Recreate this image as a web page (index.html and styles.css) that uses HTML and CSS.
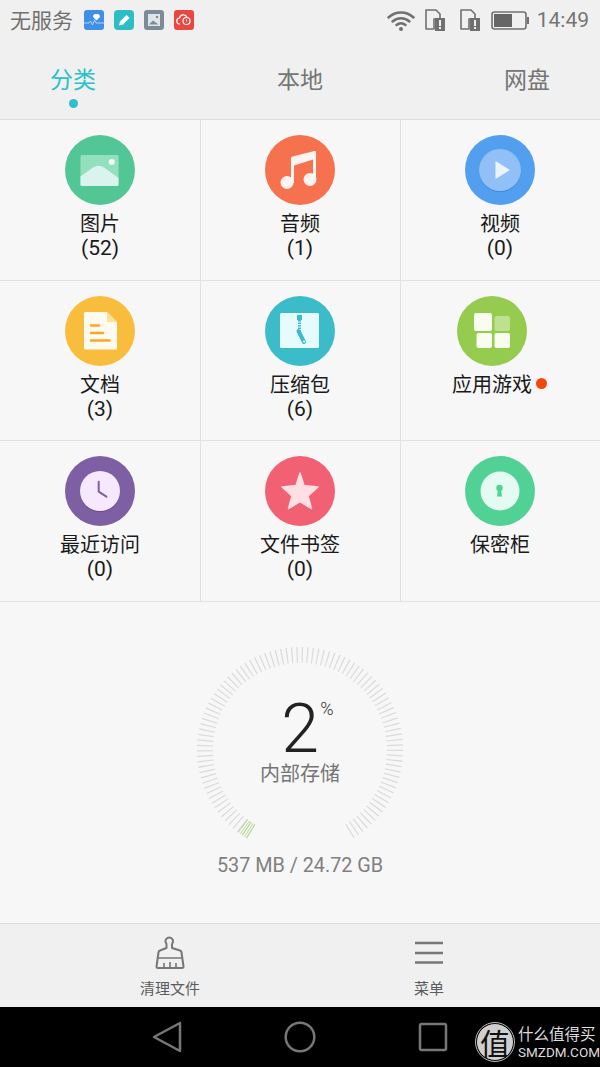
FILE: index.html
```html
<!DOCTYPE html>
<html lang="zh">
<head>
<meta charset="utf-8">
<title>文件管理</title>
<link rel="stylesheet" href="styles.css">
</head>
<body>
<div class="screen">
  <header class="top">
    <div class="status">
      <span class="carrier">无服务</span>
      <div class="notifs">
        <svg class="notif" viewBox="0 0 20 20"><rect width="20" height="20" rx="3" fill="#3f8fe6"/><path d="M12.500 10.500 9.300 7.300a2.300 2.300 0 0 1 3.200-3 2.300 2.300 0 0 1 3.200 3z" fill="#fff"/><path d="M0 13h5l1.500-2 2 4 2-5 1.500 3H20" fill="none" stroke="#cfe4fb" stroke-width=".8"/></svg>
        <svg class="notif" viewBox="0 0 20 20"><rect width="20" height="20" rx="4" fill="#2bbfc4"/><path d="M5 15.500l1-4 6.500-6.500 3 3-6.500 6.500z" fill="#fff"/></svg>
        <svg class="notif" viewBox="0 0 20 20"><rect width="20" height="20" rx="3" fill="#7c8b95"/><rect x="4" y="4" width="12" height="12" fill="#dfe5e8"/><path d="M5 14.500l4-4 5.500 4z" fill="#7c8b95"/><circle cx="13" cy="7" r="1.200" fill="#7c8b95"/></svg>
        <svg class="notif" viewBox="0 0 20 20"><rect width="20" height="20" rx="3" fill="#e8483f"/><path d="M6 14a3 3 0 0 1-.5-6 4 4 0 0 1 7.500-.8" fill="none" stroke="#fff" stroke-width="1.200"/><circle cx="12.500" cy="11" r="3.500" fill="none" stroke="#fff" stroke-width="1.200"/><path d="M12.500 9.500v2" stroke="#fff"/></svg>
      </div>
      <div class="sys">
        <svg class="wifi" viewBox="0 0 28 22"><g fill="none" stroke="#707070" stroke-width="2.500" stroke-linecap="round"><path d="M1.500 8.500a18 18 0 0 1 25 0"/><path d="M5.500 12.500a12.500 12.500 0 0 1 17 0"/><path d="M9.500 16a7 7 0 0 1 9 0"/></g><circle cx="14" cy="20" r="2" fill="#707070"/></svg>
        <svg class="sim" viewBox="0 0 20 22"><path d="M1 1h10l4 4v5H9v10H1z" fill="#f0f0f0" stroke="#707070" stroke-width="1.600" stroke-linejoin="round"/><rect x="10" y="9" width="10" height="13" fill="#707070"/><rect x="14" y="11" width="2" height="6" fill="#f0f0f0"/><rect x="14" y="18" width="2" height="2" fill="#f0f0f0"/></svg>
        <svg class="sim sim-second" viewBox="0 0 20 22"><path d="M1 1h10l4 4v5H9v10H1z" fill="#f0f0f0" stroke="#707070" stroke-width="1.600" stroke-linejoin="round"/><rect x="10" y="9" width="10" height="13" fill="#707070"/><rect x="14" y="11" width="2" height="6" fill="#f0f0f0"/><rect x="14" y="18" width="2" height="2" fill="#f0f0f0"/></svg>
        <svg class="battery" viewBox="0 0 38 19"><rect x="1" y="1" width="34" height="17" rx="2.500" fill="none" stroke="#707070" stroke-width="1.600"/><rect x="3" y="3" width="18" height="13" fill="#666"/><rect x="36" y="6" width="2" height="7" fill="#707070"/></svg>
        <span class="clock-text">14:49</span>
      </div>
    </div>
    <nav class="tabs">
      <span class="tab tab-active">分类</span>
      <span class="tab">本地</span>
      <span class="tab">网盘</span>
    </nav>
  </header>

  <section class="grid">
    <div class="cell"><div class="cell-inner">
      <svg class="icon" viewBox="0 0 70 70"><circle cx="35" cy="35" r="35" fill="#52c694"/><rect x="15.500" y="20" width="38" height="31" rx="1.500" fill="#93dfbe"/><path d="M15.500 41.500 28 32.500q5.500-3.500 11 0L53.500 43v6.500a1.500 1.500 0 0 1-1.500 1.500H17a1.500 1.500 0 0 1-1.500-1.500z" fill="#d9f4ee"/><circle cx="46.700" cy="27" r="3" fill="#f2fbf7"/></svg>
      <span class="label">图片</span><span class="count">(52)</span>
    </div></div>
    <div class="cell"><div class="cell-inner">
      <svg class="icon" viewBox="0 0 70 70"><circle cx="35" cy="35" r="35" fill="#f6724f"/><path d="M26 23.500Q26 22 27.500 21.500L49.500 16q1.500-.3 1.500 1V45h-3V24.500L29 30.500V48h-3z" fill="#fdf3f0"/><circle cx="22" cy="47.500" r="6.500" fill="#fdf3f0"/><circle cx="45" cy="44.500" r="6.500" fill="#fdf3f0"/></svg>
      <span class="label">音频</span><span class="count">(1)</span>
    </div></div>
    <div class="cell"><div class="cell-inner">
      <svg class="icon" viewBox="0 0 70 70"><circle cx="35" cy="35" r="35" fill="#529fef"/><circle cx="35" cy="36" r="21" fill="#4189e4"/><circle cx="35" cy="35" r="21" fill="#90c0f6"/><path d="M30.500 26 45 35l-14.500 9z" fill="#eaf3fe"/></svg>
      <span class="label">视频</span><span class="count">(0)</span>
    </div></div>

    <div class="cell"><div class="cell-inner">
      <svg class="icon" viewBox="0 0 70 70"><circle cx="35" cy="35" r="35" fill="#f8bd3d"/><path d="M20.500 16H42l10 10v26a1.500 1.500 0 0 1-1.500 1.500h-30A1.500 1.500 0 0 1 19 52V17.500a1.500 1.500 0 0 1 1.500-1.500z" fill="#fefaf0"/><path d="M42 16l10 10H42z" fill="#fbdf9c"/><g stroke="#f9a825" stroke-width="2.500" stroke-linecap="round"><path d="M26 29.500h8"/><path d="M26 37h12"/><path d="M26 44.500h18.500"/></g></svg>
      <span class="label">文档</span><span class="count">(3)</span>
    </div></div>
    <div class="cell"><div class="cell-inner">
      <svg class="icon" viewBox="0 0 70 70"><circle cx="35" cy="35" r="35" fill="#3cbbc9"/><rect x="15" y="17" width="39" height="35" rx="1.500" fill="#e5fbfe"/><rect x="32" y="19" width="5" height="5" fill="#3cbbc9"/><path d="M34.500 24v11" stroke="#3cbbc9" stroke-width="3" stroke-dasharray="1.500 1"/><path d="M33.500 35l5.500 11" stroke="#3cbbc9" stroke-width="4" stroke-linecap="round"/><circle cx="39" cy="45.500" r="1" fill="#e5fbfe"/></svg>
      <span class="label">压缩包</span><span class="count">(6)</span>
    </div></div>
    <div class="cell cell-badged"><div class="cell-inner">
      <svg class="icon" viewBox="0 0 70 70"><circle cx="35" cy="35" r="35" fill="#95cb4e"/><rect x="17" y="17" width="18" height="18" rx="2" fill="#f8fdf0"/><rect x="37.500" y="20" width="15.500" height="15" rx="2" fill="#bfe08f"/><rect x="19.500" y="37" width="15.500" height="15" rx="2" fill="#f8fdf0"/><rect x="37.500" y="37" width="15.500" height="15" rx="2" fill="#f8fdf0"/></svg>
      <span class="label">应用游戏<i class="badge"></i></span>
    </div></div>

    <div class="cell"><div class="cell-inner">
      <svg class="icon" viewBox="0 0 70 70"><circle cx="35" cy="35" r="35" fill="#7f5fa3"/><circle cx="35" cy="36" r="20" fill="#674888"/><circle cx="35" cy="35" r="20" fill="#f5e8ff"/><path d="M33.700 25.700v10l7.700 5" fill="none" stroke="#7f5fa3" stroke-width="2" stroke-linecap="round" stroke-linejoin="round"/></svg>
      <span class="label">最近访问</span><span class="count">(0)</span>
    </div></div>
    <div class="cell"><div class="cell-inner">
      <svg class="icon" viewBox="0 0 70 70"><circle cx="35" cy="35" r="35" fill="#f26073"/><path d="M35 17l4 12.500 14 1.500-10 9 3.500 12.500-11.500-7-11.500 7 3.500-12.500-10-9 14-1.500z" fill="#ffdfe4" stroke="#ffdfe4" stroke-width="1.500" stroke-linejoin="round"/></svg>
      <span class="label">文件书签</span><span class="count">(0)</span>
    </div></div>
    <div class="cell"><div class="cell-inner">
      <svg class="icon" viewBox="0 0 70 70"><circle cx="35" cy="35" r="35" fill="#52d195"/><circle cx="35" cy="35" r="19.500" fill="#e3fbf1"/><circle cx="34.500" cy="32" r="3.200" fill="#52d195"/><path d="M33 33h3l1 7.500h-5z" fill="#52d195"/></svg>
      <span class="label">保密柜</span>
    </div></div>
  </section>

  <section class="storage">
    <div class="gauge">
      <svg class="gauge-ring" viewBox="0 0 210 210">
        <path class="ticks" pathLength="292" d="M56.070 186.430A95 95 0 1 1 153.930 186.430"/>
        <path class="ticks-used" pathLength="15" d="M56.070 186.430A95 95 0 0 1 46.300 179.700"/>
      </svg>
      <div class="gauge-text">
        <span class="percent">2<sup class="percent-sign">%</sup></span>
        <span class="gauge-label">内部存储</span>
      </div>
    </div>
    <p class="usage">537 MB / 24.72 GB</p>
  </section>

  <footer class="tools">
    <div class="tool">
      <svg class="tool-icon" viewBox="0 0 30 34"><path d="M11.500 12V8.500c0-1-.5-1.500-1-2.500a3.800 3.800 0 1 1 7.500 0c-.5 1-1 1.500-1 2.500V12l8 2.500c1 .3 1.500.8 1.500 2l2 14c.1 1-.4 1.500-1.500 1.500H3c-1 0-1.500-.5-1.500-1.500l2-14c0-1 .5-1.700 1.500-2z" fill="none" stroke="#777" stroke-width="2" stroke-linejoin="round"/><path d="M3 22h24M9 27v4M15 26v5M21 27v4" fill="none" stroke="#777" stroke-width="1.600"/></svg>
      <span class="tool-label">清理文件</span>
    </div>
    <div class="tool">
      <svg class="tool-icon" viewBox="0 0 30 34"><g stroke="#777" stroke-width="2.500"><path d="M1 7h28"/><path d="M1 17h28"/><path d="M1 26.500h28"/></g></svg>
      <span class="tool-label">菜单</span>
    </div>
  </footer>

  <div class="navbar">
    <svg class="nav-btn" viewBox="0 0 30 32"><path d="M28 2 2 16l26 14z" fill="none" stroke="#777" stroke-width="2.500" stroke-linejoin="round"/></svg>
    <svg class="nav-btn" viewBox="0 0 32 32"><circle cx="16" cy="16" r="14.300" fill="none" stroke="#777" stroke-width="2.500"/></svg>
    <svg class="nav-btn" viewBox="0 0 30 30"><rect x="2" y="2" width="26" height="26" rx="1.500" fill="none" stroke="#777" stroke-width="2.500"/></svg>
    <div class="watermark">
      <span class="wm-seal">值</span>
      <div class="wm-text"><span class="wm-cn">什么值得买</span><span class="wm-en">SMZDM.COM</span></div>
    </div>
  </div>
</div>
</body>
</html>
```

FILE: styles.css
```css
* { box-sizing: border-box; }
html, body { margin: 0; padding: 0; }
body { background: #f7f7f7; font-family: "Roboto", "Noto Sans CJK SC", sans-serif; }
.screen { width: 600px; height: 1067px; display: flex; flex-direction: column; overflow: hidden; background: #f7f7f7; }

.top { height: 120px; background: #f0f0f0; border-bottom: 1px solid #dcdcdc; }
.status { height: 40px; display: flex; align-items: center; padding: 0 11px 0 10px; color: #707070; }
.carrier { font: 21px/38px "Noto Sans CJK SC", sans-serif; height: 40px; width: 74px; }
.notifs { display: flex; gap: 10px; }
.notif { width: 20px; height: 20px; display: block; }
.sys { margin-left: auto; display: flex; align-items: center; }
.wifi { width: 28px; height: 22px; margin-right: 10px; }
.sim { width: 20px; height: 22px; margin-right: 15px; }
.sim-second { margin-right: 11px; }
.battery { width: 38px; height: 19px; margin-right: 8px; }
.clock-text { font: 400 21px/40px "Roboto", sans-serif; color: #757575; }

.tabs { height: 79px; display: flex; justify-content: space-between; align-items: center; padding-bottom: 4px; }
.tab { width: 146px; text-align: center; position: relative; font: 23px/30px "Noto Sans CJK SC", sans-serif; color: #757575; }
.tab-active { color: #2bc0cc; }
.tab-active::after { content: ""; position: absolute; left: 68.500px; top: 36px; width: 9px; height: 9px; border-radius: 50%; background: #2bc0cc; }

.grid { display: grid; grid-template-columns: repeat(3, 200px); grid-template-rows: 161px 160px 161px; }
.cell { display: flex; justify-content: center; padding-top: 15px; border-bottom: 1px solid #e2e2e2; box-shadow: inset 1px 0 #e2e2e2; }
.cell:nth-child(3n + 1) { box-shadow: none; }
.cell-inner { display: flex; flex-direction: column; align-items: center; color: #1a1a1a; }
.cell-badged .cell-inner { padding-right: 16px; }
.icon { width: 70px; height: 70px; display: block; margin-bottom: 5px; }
.label { position: relative; font: 20px/25px "Noto Sans CJK SC", sans-serif; white-space: nowrap; }
.count { font: 21px/25px "Roboto", sans-serif; margin-top: 1px; }
.badge { position: absolute; left: 84px; top: 7px; width: 11px; height: 11px; border-radius: 50%; background: #f4470f; }

.storage { flex: 1; display: flex; flex-direction: column; align-items: center; padding-top: 43px; }
.gauge { position: relative; width: 210px; height: 210px; }
.gauge-ring { width: 210px; height: 210px; display: block; }
.ticks { fill: none; stroke: #dadada; stroke-width: 16; stroke-dasharray: .7 2.300; }
.ticks-used { fill: none; stroke: #8fd14f; stroke-width: 16; stroke-dasharray: .7 2.300; }
.gauge-text { position: absolute; left: 0; right: 0; top: 54px; display: flex; flex-direction: column; align-items: center; }
.percent { position: relative; font: 300 68px/60px "Roboto", sans-serif; color: #222; }
.percent-sign { position: absolute; left: 39px; top: 1px; font: 300 18px/18px "Roboto", sans-serif; color: #333; }
.gauge-label { font: 20px/26px "Noto Sans CJK SC", sans-serif; color: #757575; margin-top: 1px; }
.usage { margin: 1px 0 0; font: 19.800px/20px "Roboto", sans-serif; color: #808080; }

.tools { height: 84px; flex: none; background: #f0f0f0; border-top: 1px solid #dcdcdc; display: grid; grid-template-columns: 259px 259px; padding-left: 40.500px; }
.tool { display: flex; flex-direction: column; align-items: center; padding-top: 12px; }
.tool-icon { width: 30px; height: 34px; display: block; }
.tool-label { font: 15px/20px "Noto Sans CJK SC", sans-serif; color: #5c5c5c; margin-top: 8px; }

.navbar { height: 60px; flex: none; background: #000; position: relative; display: grid; grid-template-columns: 30px 32px 30px; column-gap: 102px; justify-content: start; padding: 14px 0 0 152px; }
.nav-btn { display: block; width: 100%; height: 32px; }
.watermark { position: absolute; left: 476px; top: 16px; display: flex; align-items: center; gap: 4px; }
.wm-seal { width: 38px; height: 38px; border-radius: 50%; background: #cfcfcf; color: #111; border: 1px solid #000; outline: 1px solid #bbb; font: 30px/36px "Noto Sans CJK SC", sans-serif; text-align: center; }
.wm-text { display: flex; flex-direction: column; color: #dcdcdc; }
.wm-cn { font: 15.500px/19px "Noto Sans CJK SC", sans-serif; white-space: nowrap; }
.wm-en { font: 13.500px/18px "Roboto", sans-serif; white-space: nowrap; }
```
